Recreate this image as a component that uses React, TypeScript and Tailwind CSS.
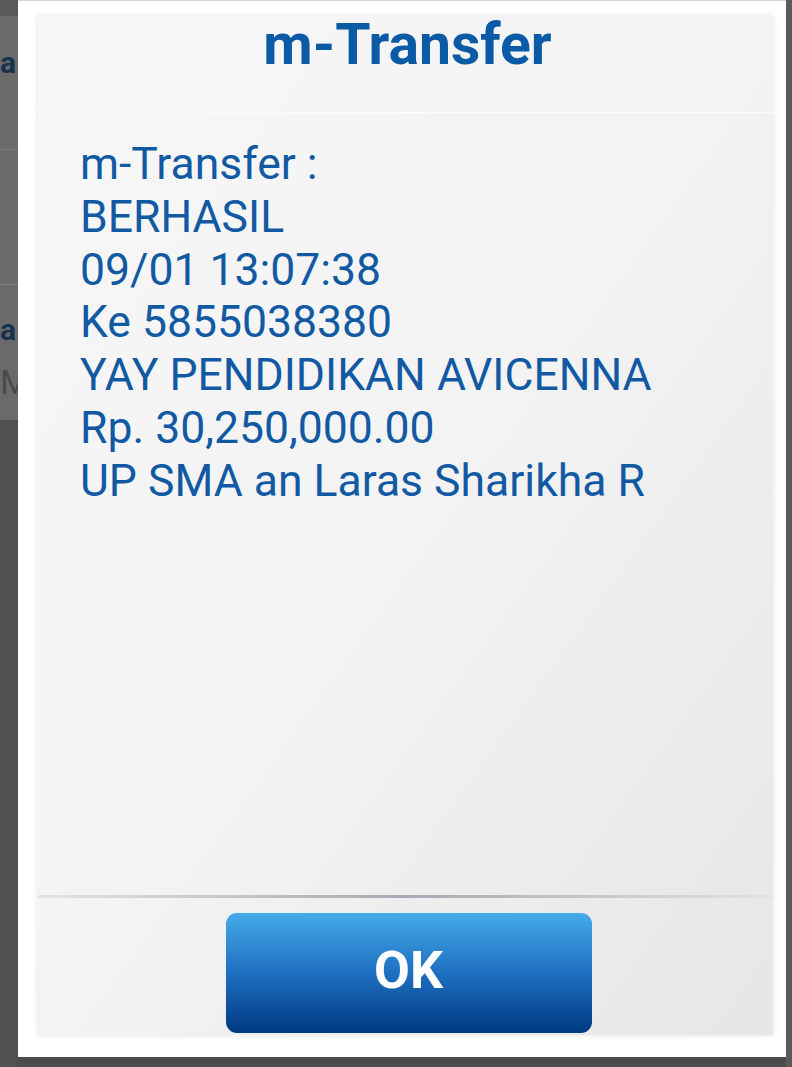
import React from "react";

const lines = [
  "m-Transfer :",
  "BERHASIL",
  "09/01 13:07:38",
  "Ke 5855038380",
  "YAY PENDIDIKAN AVICENNA",
  "Rp. 30,250,000.00",
  "UP SMA an Laras Sharikha R",
];

const App: React.FC = () => {
  return (
    <div
      className="w-[792px] h-[1067px] flex bg-[#4c4c4c] overflow-hidden"
      style={{ fontFamily: "Roboto, 'Liberation Sans', sans-serif" }}
    >
      {/* dimmed app behind the dialog */}
      <div className="w-[18px] shrink-0 flex flex-col overflow-hidden">
        <div className="h-[16px] bg-[#595959]" />
        <div className="h-[134px] bg-[#6a6a6a] border-b border-[#7d7d7d] flex items-center">
          <span className="text-[30px] font-bold text-[#17324f] leading-none -mt-[40px]">a</span>
        </div>
        <div className="h-[135px] bg-[#6a6a6a] border-b border-[#7d7d7d]" />
        <div className="h-[135px] bg-[#6a6a6a] flex flex-col pt-[30px]">
          <span className="text-[30px] font-bold text-[#17324f] leading-none">a:</span>
          <span className="text-[34px] text-[#4a4a4a] leading-none mt-[20px]">M</span>
        </div>
        <div className="flex-1 bg-[#505050]" />
      </div>

      {/* white frame */}
      <div className="w-[768px] h-[1057px] shrink-0 bg-white border-t border-[#d8d8d8] pl-[20px] pr-[13px] pt-[15px]">
        <div className="w-[735px] h-[1019px] flex flex-col bg-gradient-to-br from-[#f7f7f7] via-[#f3f3f3] to-[#e6e6e6] shadow-[0_0_6px_rgba(0,0,0,0.12)]">
          <div className="h-[97px] flex justify-center pt-[0px] pl-[4px] border-b border-[#fbfbfb]">
            <h1 className="text-[57px] font-bold text-[#0b5aa6] leading-[57px]">m-Transfer</h1>
          </div>
          <div className="flex-1 pl-[42px] pt-[25px]">
            {lines.map((line, i) => (
              <p key={i} className="text-[44.5px] text-[#115aa3] leading-[52.8px]">
                {line}
              </p>
            ))}
          </div>
          <div className="h-[3px] bg-gradient-to-r from-[#e3e3e6] via-[#a9a9b3] to-[#e3e3e6]" />
          <div className="h-[137px] flex justify-center pt-[15px] pl-[6px]">
            <button className="w-[366px] h-[120px] rounded-[11px] bg-gradient-to-b from-[#45abea] via-[#1f6fc0] to-[#023a84] text-white text-[52px] font-bold leading-none pb-[4px]">
              OK
            </button>
          </div>
        </div>
      </div>
      <div className="flex-1 bg-[#5b5b5b]" />
    </div>
  );
};

export default App;
